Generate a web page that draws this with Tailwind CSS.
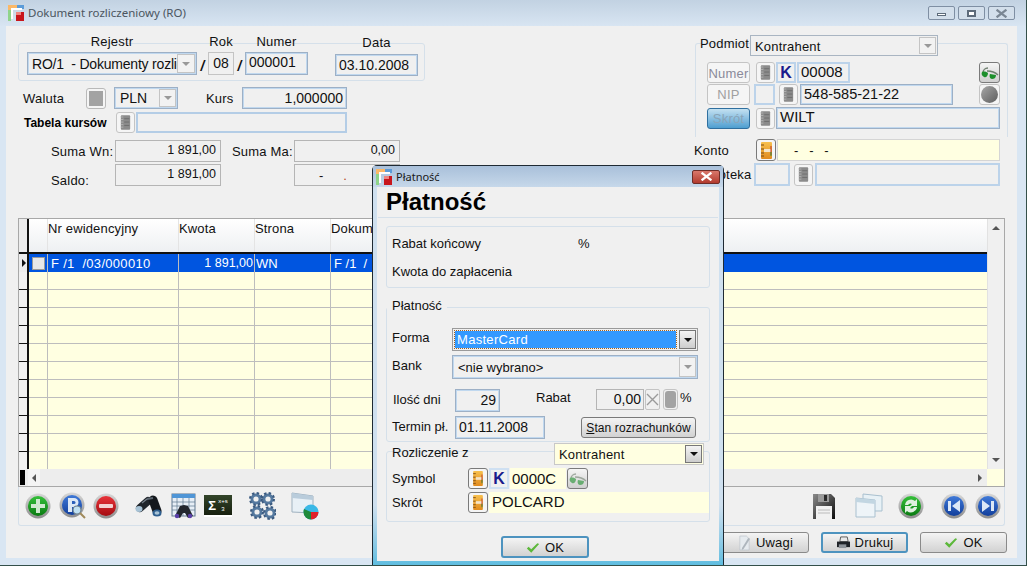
<!DOCTYPE html>
<html lang="pl">
<head>
<meta charset="UTF-8">
<title>Dokument rozliczeniowy (RO)</title>
<script src="https://cdn.jsdelivr.net/npm/@tailwindcss/browser@4"></script>
</head>
<body class="bg-[#d9e6f3] overflow-hidden font-['Liberation_Sans',sans-serif] text-[13px] leading-none text-[#111]">

<!-- shared icons -->
<svg class="absolute w-0 h-0" aria-hidden="true">
  <defs>
    <linearGradient id="gOrange" x1="0" y1="0" x2="0" y2="1"><stop offset="0" stop-color="#f7c04e"/><stop offset="1" stop-color="#e08a1e"/></linearGradient>
    <linearGradient id="gGreen" x1="0" y1="0" x2="0" y2="1"><stop offset="0" stop-color="#35c03a"/><stop offset="1" stop-color="#0a7a12"/></linearGradient>
    <linearGradient id="gRed" x1="0" y1="0" x2="0" y2="1"><stop offset="0" stop-color="#e8333a"/><stop offset="1" stop-color="#a50d12"/></linearGradient>
    <linearGradient id="gBlue" x1="0" y1="0" x2="0" y2="1"><stop offset="0" stop-color="#3f79d8"/><stop offset="1" stop-color="#123f9c"/></linearGradient>
    <linearGradient id="gRim" x1="0" y1="0" x2="0" y2="1"><stop offset="0" stop-color="#d8d8d8"/><stop offset="1" stop-color="#8d8d8d"/></linearGradient>
    <linearGradient id="gDisk" x1="0" y1="0" x2="1" y2="1"><stop offset="0" stop-color="#8a8a8a"/><stop offset="1" stop-color="#0d0d0d"/></linearGradient>
    <symbol id="app" viewBox="0 0 16 16">
      <path d="M0 0h9v3H3v2H0z" fill="#fbb868"/><path d="M9 0h7v4H9z" fill="#5b9bd8"/><path d="M0 5h3v11H0z" fill="#8fd48a"/><path d="M3 3h11v2H5v9H3z" fill="#fff"/><path d="M8 7h8v9H8z" fill="#c8161c"/><path d="M8 7h5v3H8z" fill="#f0857f"/>
    </symbol>
    <symbol id="bookGray" viewBox="0 0 13 17">
      <rect x="1" y="0" width="11" height="17" rx="1" fill="#8b8b8b"/><path d="M1 2h3M1 5h3M1 8h3M1 11h3M1 14h3" stroke="#b7b7b7"/><path d="M5 4h6M5 8h6M5 12h6" stroke="#6a6a6a"/>
    </symbol>
    <symbol id="bookOrange" viewBox="0 0 13 17">
      <rect x="1" y="0" width="11" height="17" rx="1" fill="url(#gOrange)"/><path d="M1 3h3M1 7h3M1 11h3M1 14h3" stroke="#7c4a10"/><path d="M4 7h7v3H4z" fill="#f4e4c8"/><path d="M11 4v9" stroke="#c0392b"/><path d="M11 10v4" stroke="#3a9a35"/>
    </symbol>
    <symbol id="glasses" viewBox="0 0 18 14">
      <path d="M2 7c0-3 2-5 5-5M6 5c4 0 8 1 11 4" stroke="#6f7f6f" stroke-width="1.300" fill="none"/><path d="M1 6c2-1 5 0 6 1 0 3-2 5-4 4S0 8 1 6zM9 8l6 1c0 3-2 4-4 4s-3-3-2-5z" fill="#1d8f2c"/>
    </symbol>
    <symbol id="plusBall" viewBox="0 0 26 26">
      <circle cx="13" cy="13" r="12.500" fill="url(#gRim)"/><circle cx="13" cy="13" r="10" fill="url(#gGreen)"/><path d="M11 6h4v5h5v4h-5v5h-4v-5H6v-4h5z" fill="#cfe9cf"/>
    </symbol>
    <symbol id="minusBall" viewBox="0 0 26 26">
      <circle cx="13" cy="13" r="12.500" fill="url(#gRim)"/><circle cx="13" cy="13" r="10" fill="url(#gRed)"/><rect x="6" y="11" width="14" height="4" rx="1" fill="#f3d2d2"/>
    </symbol>
    <symbol id="pBall" viewBox="0 0 28 28">
      <circle cx="13" cy="13" r="12.500" fill="url(#gRim)"/><circle cx="13" cy="13" r="10" fill="url(#gBlue)"/><path d="M9 6h6a4 4 0 0 1 0 9h-2v5H9z" fill="#dce8f6"/><path d="M13 9v3h2a1.500 1.500 0 0 0 0-3z" fill="#2a5fba"/><circle cx="18" cy="18" r="4" fill="#bfe0f2" stroke="#6a7d8a" stroke-width="1.200"/><path d="M21 21l5 5" stroke="#a08a5a" stroke-width="2"/>
    </symbol>
    <symbol id="refreshBall" viewBox="0 0 26 26">
      <circle cx="13" cy="13" r="12.500" fill="url(#gRim)"/><circle cx="13" cy="13" r="10" fill="url(#gGreen)"/><path d="M7 12a6 6 0 0 1 10-4l2-2v7h-7l2-2a3 3 0 0 0-4 1zM19 14a6 6 0 0 1-10 4l-2 2v-7h7l-2 2a3 3 0 0 0 4-1z" fill="#dff0df"/>
    </symbol>
    <symbol id="prevBall" viewBox="0 0 26 26">
      <circle cx="13" cy="13" r="12.500" fill="url(#gRim)"/><circle cx="13" cy="13" r="10" fill="url(#gBlue)"/><path d="M7 8h3v10H7zM19 7v12l-8-6z" fill="#dce8f6"/>
    </symbol>
    <symbol id="nextBall" viewBox="0 0 26 26">
      <circle cx="13" cy="13" r="12.500" fill="url(#gRim)"/><circle cx="13" cy="13" r="10" fill="url(#gBlue)"/><path d="M16 8h3v10h-3zM7 7v12l8-6z" fill="#dce8f6"/>
    </symbol>
    <symbol id="binoculars" viewBox="0 0 28 22">
      <path d="M5 13L13 6" stroke="#20252b" stroke-width="8" stroke-linecap="round"/><path d="M18 5l4 11" stroke="#14181d" stroke-width="9" stroke-linecap="round"/><path d="M12 4l6-1" stroke="#5c6670" stroke-width="2"/><path d="M7 8l5-4" stroke="#77828c" stroke-width="1.300"/><ellipse cx="4" cy="14" rx="3.500" ry="3" fill="#a8c3d6"/><ellipse cx="22" cy="18" rx="4.500" ry="3.500" fill="#2f5f8f"/><ellipse cx="22" cy="18" rx="2.500" ry="1.800" fill="#a8c3d6"/>
    </symbol>
    <symbol id="tableBino" viewBox="0 0 26 26">
      <rect x="1" y="1" width="23" height="22" fill="#e7eef6" stroke="#60788f"/><rect x="1" y="1" width="23" height="4" fill="#4f95d6"/><path d="M1 9h23M1 13h23M1 17h23M6 5v18M12 5v18M18 5v18" stroke="#60788f" stroke-width=".7"/><path d="M9 13l4-1 4 1 5 10-5 2-3-5h-2l-3 5-5-2z" fill="#22262e"/><circle cx="6" cy="23" r="2.200" fill="#5a3fa8"/><circle cx="19" cy="23" r="2.200" fill="#5a3fa8"/>
    </symbol>
    <symbol id="gears" viewBox="0 0 28 28">
      <g fill="#55799f"><circle cx="8" cy="7" r="5.500"/><circle cx="20" cy="7" r="5.500"/><circle cx="9" cy="20" r="5.500"/><circle cx="22" cy="21" r="5.500"/></g>
      <g stroke="#3a5a80" stroke-width="2" stroke-dasharray="2.500 2.200" fill="none"><circle cx="8" cy="7" r="6"/><circle cx="20" cy="7" r="6"/><circle cx="9" cy="20" r="6"/><circle cx="22" cy="21" r="6"/></g>
      <g fill="#f0f0f0"><circle cx="8" cy="7" r="2.600"/><circle cx="20" cy="7" r="2.600"/><circle cx="9" cy="20" r="2.600"/><circle cx="22" cy="21" r="2.600"/></g>
    </symbol>
    <symbol id="windowPie" viewBox="0 0 28 28">
      <path d="M1 1l21 3v17L1 20z" fill="#e8f0f6" stroke="#9fb1bf"/><path d="M1 1l21 3v4L1 6z" fill="#b9ccdb"/><circle cx="20" cy="20" r="7.500" fill="#3ab8e6"/><path d="M20 20v7.500a7.500 7.500 0 0 0 7.500-7.500z" fill="#e0212a"/><path d="M20 20h-7.500a7.500 7.500 0 0 0 7.500 7.500z" fill="#1f8a3a"/><path d="M20 20l-7-3a7.500 7.500 0 0 0-.500 3z" fill="#1f8a3a"/>
    </symbol>
    <symbol id="floppy" viewBox="0 0 24 28">
      <path d="M1 2h18l4 4v21H1z" fill="url(#gDisk)"/><rect x="6" y="2" width="11" height="8" fill="#9a9a9a"/><rect x="12" y="3" width="3" height="6" fill="#2a2a2a"/><rect x="4" y="14" width="16" height="13" fill="#f1f1f1"/><path d="M6 18h12M6 21h12" stroke="#bbb"/>
    </symbol>
    <symbol id="windows" viewBox="0 0 28 26">
      <path d="M8 1l19 2v15H8z" fill="#e8f1f6" stroke="#a9c0cf"/><path d="M1 5l19 2v17H1z" fill="#eef4f8" stroke="#a9c0cf"/><path d="M1 5l19 2v4L1 9z" fill="#c2d6e2"/>
    </symbol>
    <symbol id="check" viewBox="0 0 16 12">
      <path d="M1 7l2-2 3 3 7-7 2 1-9 10z" fill="#5cb83a"/>
    </symbol>
    <symbol id="printer" viewBox="0 0 16 14">
      <path d="M5 1h7l1 5H4z" fill="#e8e8e8" stroke="#333" stroke-width=".8"/><path d="M1 6h14v6H1z" fill="#1f2328"/><path d="M3 9h8v4H3z" fill="#8d9399"/>
    </symbol>
    <symbol id="note" viewBox="0 0 14 17">
      <path d="M2 1h7l3 3v12H2z" fill="#e6ebef" stroke="#c0c7cd" stroke-width=".8"/><path d="M11 3l2 1-7 11-2 1 .3-2z" fill="#aeb6bd"/>
    </symbol>
    <symbol id="closeX" viewBox="0 0 12 10">
      <path d="M1.500 1.500l9 7M10.500 1.500l-9 7" stroke="currentColor" stroke-width="2.500" stroke-linecap="square"/>
    </symbol>
  </defs>
</svg>

<div class="relative w-[1027px] h-[566px] overflow-hidden border-b border-r border-[#34504a]">

  <!-- main window title bar -->
  <div class="h-[26px] flex items-center pl-[8px] pr-[11px] bg-gradient-to-b from-[#c2d2e2] to-[#d8e5f2]">
    <svg class="w-[16px] h-[16px]"><use href="#app"/></svg>
    <span class="ml-[4px] font-['Noto_Sans',sans-serif] text-[11.5px] text-[#4b5560]">Dokument rozliczeniowy (RO)</span>
    <div class="ml-auto flex gap-[3px]">
      <div class="w-[27px] h-[14px] rounded-[2px] border border-[#7f8fa3] bg-[#d3dfeb] flex items-center justify-center"><div class="w-[9px] h-[3px] mt-[3px] border border-[#5d6b7a] bg-white"></div></div>
      <div class="w-[27px] h-[14px] rounded-[2px] border border-[#7f8fa3] bg-[#d3dfeb] flex items-center justify-center"><div class="w-[9px] h-[7px] border-2 border-[#5d6b7a] bg-white"></div></div>
      <div class="w-[27px] h-[14px] rounded-[2px] border border-[#7f8fa3] bg-[#d3dfeb] flex items-center justify-center text-[#7b8794]"><svg class="w-[11px] h-[9px]"><use href="#closeX"/></svg></div>
    </div>
  </div>

  <!-- main window body -->
  <div class="ml-[6px] w-[1011px] h-[532px] bg-[#f0f0f0]">
    <div class="flex h-[192px]">

      <!-- left form -->
      <div class="w-[688px] pl-[12px] pt-[17px]">
        <div class="w-[407px] h-[38px] border border-[#d5e0ea] rounded-[3px] pl-[8px] flex items-start">
          <div class="-mt-[9px] w-[170px]">
            <div class="h-[17px] text-center tracking-[0.2px]">Rejestr</div>
            <div class="h-[23px] flex items-center pl-[4px] border border-[#9db0c6] shadow-[inset_0_0_0_1px_#c0d8ef] text-[14px] overflow-hidden relative whitespace-nowrap">
              <span class="whitespace-pre tracking-[-0.2px]">RO/1  - Dokumenty rozlic</span>
              <div class="absolute right-[1px] top-[1px] w-[18px] h-[19px] bg-[#f2f2f2] border border-[#c4c4c4] flex items-center justify-center"><div class="border-x-[4px] border-x-transparent border-t-[4px] border-t-[#999]"></div></div>
            </div>
          </div>
          <div class="w-[11px] mt-[15px] text-center font-bold italic text-[14px]">/</div>
          <div class="-mt-[9px] w-[26px]">
            <div class="h-[17px] text-center whitespace-nowrap tracking-[0.2px]">Rok</div>
            <div class="h-[23px] flex items-center justify-center pb-[2px] border border-[#c4c4c4] text-[14px]">08</div>
          </div>
          <div class="w-[11px] mt-[15px] text-center font-bold italic text-[14px]">/</div>
          <div class="-mt-[9px] w-[63px]">
            <div class="h-[17px] text-center tracking-[0.2px]">Numer</div>
            <div class="h-[23px] flex items-center pl-[3px] pb-[3px] border border-[#9db0c6] shadow-[inset_0_0_0_1px_#c0d8ef] text-[14px]">000001</div>
          </div>
          <div class="-mt-[8px] ml-[27px] w-[83px]">
            <div class="h-[18px] text-center tracking-[0.2px]">Data</div>
            <div class="h-[22px] flex items-center pl-[3px] border border-[#9db0c6] shadow-[inset_0_0_0_1px_#c0d8ef] text-[14px]">03.10.2008</div>
          </div>
        </div>

        <div class="mt-[6px] pl-[5px] flex items-center h-[22px]">
          <span class="w-[63px] tracking-[0.2px]">Waluta</span>
          <div class="w-[20px] h-[21px] border border-[#b9b9b9] rounded-[3px] bg-[#f5f5f5] p-[2px]"><div class="w-full h-full bg-[#a3a3a3]"></div></div>
          <div class="ml-[8px] w-[64px] h-[22px] relative flex items-center pl-[5px] border border-[#9db0c6] shadow-[inset_0_0_0_1px_#c0d8ef] text-[14px]">PLN
            <div class="absolute right-[1px] top-[1px] w-[17px] h-[18px] bg-[#f2f2f2] border border-[#c4c4c4] flex items-center justify-center"><div class="border-x-[4px] border-x-transparent border-t-[4px] border-t-[#999]"></div></div>
          </div>
          <span class="ml-[28px] w-[36px] tracking-[0.2px]">Kurs</span>
          <div class="w-[105px] h-[22px] flex items-center justify-end pr-[3px] pb-[1px] border border-[#9db0c6] shadow-[inset_0_0_0_1px_#c0d8ef] text-[14px]">1,000000</div>
        </div>

        <div class="mt-[3px] pl-[6px] flex items-center h-[21px]">
          <span class="w-[92px] font-bold text-[12px] text-black">Tabela kursów</span>
          <div class="w-[19px] h-[21px] border border-[#c4c4c4] rounded-[3px] bg-[#f5f5f5] flex items-center justify-center"><svg class="w-[11px] h-[15px]"><use href="#bookGray"/></svg></div>
          <div class="ml-[1px] w-[211px] h-[21px] border-2 border-[#b4cde6]"></div>
        </div>

        <div class="mt-[7px] pl-[33px] flex items-center h-[22px]">
          <span class="w-[64px] tracking-[0.2px]">Suma Wn:</span>
          <div class="w-[106px] h-[22px] flex items-center justify-end pr-[4px] pb-[1px] border border-[#b5b5b5] text-[12.5px]">1 891,00</div>
          <span class="ml-[11px] w-[62px] tracking-[0.2px]">Suma Ma:</span>
          <div class="w-[106px] h-[22px] flex items-center justify-end pr-[4px] pb-[1px] border border-[#b5b5b5] text-[12.5px]">0,00</div>
        </div>
        <div class="mt-[2px] pl-[33px] flex items-center h-[22px]">
          <span class="w-[64px] pt-[10px] tracking-[0.2px]">Saldo:</span>
          <div class="w-[106px] h-[22px] flex items-center justify-end pr-[4px] pb-[1px] border border-[#b5b5b5] text-[12.5px]">1 891,00</div>
          <div class="ml-[73px] w-[106px] h-[22px] flex items-center pl-[24px] gap-[20px] border border-[#b5b5b5]"><span>-</span><span class="text-[#b34a20]">.</span></div>
        </div>
      </div>

      <!-- right form -->
      <div class="w-[323px] pl-[1px] pt-[17px]">
        <div class="w-[313px] h-[94px] border-x border-t border-[#d5e0ea] rounded-t-[3px] pl-[11px] pr-[7px]">
          <div class="-mt-[9px] -ml-[7px] flex items-center h-[21px]">
            <span class="w-[50px] pb-[4px] tracking-[0.2px]">Podmiot</span>
            <div class="relative w-[188px] h-[21px] flex items-center pl-[4px] pt-[1px] border border-[#a9b5c2] bg-[#f0f0f0] tracking-[0.2px]">Kontrahent
              <div class="absolute right-[1px] top-[1px] w-[17px] h-[17px] bg-[#f2f2f2] border border-[#c4c4c4] flex items-center justify-center"><div class="border-x-[4px] border-x-transparent border-t-[4px] border-t-[#999]"></div></div>
            </div>
          </div>
          <div class="mt-[6px] flex items-center h-[21px]">
            <div class="w-[43px] h-[21px] flex items-center justify-center pt-[1px] border border-[#c4c4c4] rounded-[3px] bg-[#f5f5f5] text-[#8a8a9a] tracking-[0.2px]">Numer</div>
            <div class="ml-[6px] w-[19px] h-[21px] border border-[#c4c4c4] rounded-[3px] bg-[#f5f5f5] flex items-center justify-center"><svg class="w-[11px] h-[15px]"><use href="#bookGray"/></svg></div>
            <div class="ml-[1px] w-[20px] h-[21px] flex items-center justify-center border-2 border-[#bcd3ea] font-bold text-[16px] text-[#1a1a8c]">K</div>
            <div class="ml-[1px] w-[53px] h-[21px] flex items-center pl-[2px] pb-[2px] border-2 border-[#bcd3ea] text-[15px]">00008</div>
            <div class="ml-auto w-[21px] h-[21px] border border-[#7a7a7a] rounded-[3px] bg-gradient-to-b from-[#f5f5f5] to-[#cfcfcf] flex items-center justify-center"><svg class="w-[18px] h-[14px]"><use href="#glasses"/></svg></div>
          </div>
          <div class="mt-[1px] flex items-center h-[21px]">
            <div class="w-[43px] h-[21px] flex items-center justify-center border border-[#c4c4c4] rounded-[3px] bg-[#f5f5f5] text-[#a0a0a0] tracking-[0.2px]">NIP</div>
            <div class="ml-[4px] w-[21px] h-[21px] border-2 border-[#bcd3ea]"></div>
            <div class="ml-[4px] w-[19px] h-[21px] border border-[#c4c4c4] rounded-[3px] bg-[#f5f5f5] flex items-center justify-center"><svg class="w-[11px] h-[15px]"><use href="#bookGray"/></svg></div>
            <div class="ml-[2px] w-[153px] h-[21px] flex items-center pl-[3px] pb-[1px] border border-[#9db0c6] shadow-[inset_0_0_0_1px_#c0d8ef] text-[14.5px]">548-585-21-22</div>
            <div class="ml-auto w-[21px] h-[21px] border border-[#c4c4c4] rounded-[3px] bg-[#f5f5f5] flex items-center justify-center"><div class="w-[17px] h-[17px] rounded-full bg-gradient-to-br from-[#a8a8a8] to-[#5e5e5e]"></div></div>
          </div>
          <div class="mt-[2px] flex items-center h-[22px]">
            <div class="w-[43px] h-[21px] flex items-center justify-center border border-[#2f6f9f] rounded-[3px] bg-gradient-to-b from-[#c3e1f1] to-[#4d9ed0] text-[#88a4b8] tracking-[0.2px]">Skrót</div>
            <div class="ml-[6px] w-[19px] h-[21px] border border-[#c4c4c4] rounded-[3px] bg-[#f5f5f5] flex items-center justify-center"><svg class="w-[11px] h-[15px]"><use href="#bookGray"/></svg></div>
            <div class="ml-[1px] w-[224px] h-[22px] flex items-center pl-[3px] pb-[3px] border border-[#9db0c6] shadow-[inset_0_0_0_1px_#c0d8ef] text-[15px]">WILT</div>
          </div>
        </div>
        <div class="mt-[2px] -ml-[1px] flex items-center h-[22px]">
          <span class="w-[62px] tracking-[0.2px]">Konto</span>
          <div class="w-[20px] h-[22px] border border-[#7a7a7a] rounded-[3px] bg-[#f5f5f5] flex items-center justify-center"><svg class="w-[13px] h-[17px]"><use href="#bookOrange"/></svg></div>
          <div class="ml-[1px] w-[223px] h-[22px] flex items-center pl-[16px] bg-[#ffffe1] border border-[#d5d5d5] whitespace-pre">-   -   -</div>
        </div>
        <div class="mt-[2px] -ml-[1px] flex items-center h-[23px]">
          <span class="w-[60px] tracking-[0.2px]">Kartoteka</span>
          <div class="w-[36px] h-[23px] border-2 border-[#bcd3ea]"></div>
          <div class="ml-[4px] w-[19px] h-[22px] border border-[#c4c4c4] rounded-[3px] bg-[#f5f5f5] flex items-center justify-center"><svg class="w-[11px] h-[15px]"><use href="#bookGray"/></svg></div>
          <div class="ml-[2px] w-[185px] h-[23px] border-2 border-[#bcd3ea]"></div>
        </div>
      </div>
    </div>

    <!-- grid with toolbar -->
    <div class="ml-[12px] w-[987px] h-[308px]">
      <div class="border-x border-t border-[#a8a8a8]">
        <div class="flex h-[250px]">
          <div class="w-[968px] overflow-hidden">
            <!-- header -->
            <div class="flex h-[35px] border-b-2 border-b-[#111] bg-gradient-to-b from-white to-[#eef0f2]">
              <div class="w-[10px] bg-[#ececec] border-r-2 border-r-[#111]"></div>
              <div class="w-[19px] border-r border-r-[#e4e4e4]"></div>
              <div class="w-[131px] pt-[3px] border-r border-r-[#e4e4e4] tracking-[0.15px]">Nr ewidencyjny</div>
              <div class="w-[76px] pt-[3px] border-r border-r-[#e4e4e4] tracking-[0.15px]">Kwota</div>
              <div class="w-[76px] pt-[3px] border-r border-r-[#e4e4e4] tracking-[0.15px]">Strona</div>
              <div class="pt-[3px] tracking-[0.15px]">Dokument</div>
            </div>
            <!-- selected row -->
            <div class="flex h-[18px]">
              <div class="w-[10px] bg-[#ececec] border-r-2 border-r-[#111] flex items-center justify-end pr-[1px]"><div class="border-y-[4px] border-y-transparent border-l-[4px] border-l-[#111]"></div></div>
              <div class="w-[19px] bg-[#0055e0] border-r border-r-[#bdbdbd] flex items-center justify-center"><div class="w-[13px] h-[13px] bg-[#e8e8e8] border border-[#9a9a9a]"></div></div>
              <div class="w-[131px] bg-[#0055e0] text-white pl-[3px] flex items-center border-r border-r-[#bdbdbd] whitespace-pre tracking-[0.3px]">F /1  /03/000010</div>
              <div class="w-[76px] bg-[#0055e0] text-white pr-[1px] flex items-center justify-end border-r border-r-[#bdbdbd] text-[12.5px]">1 891,00</div>
              <div class="w-[76px] bg-[#0055e0] text-white pl-[1px] flex items-center border-r border-r-[#bdbdbd]">WN</div>
              <div class="flex-1 bg-[#0055e0] text-white pl-[3px] flex items-center whitespace-pre">F /1  /</div>
            </div>
            <!-- empty rows -->
            <div class="flex h-[18px]"><div class="w-[10px] bg-[#f0f0f0] border-r-2 border-r-[#111] border-b border-b-[#111]"></div><div class="w-[19px] bg-[#ffffe1] border-b border-r border-[#bdbdbd]"></div><div class="w-[131px] bg-[#ffffe1] border-b border-r border-[#bdbdbd]"></div><div class="w-[76px] bg-[#ffffe1] border-b border-r border-[#bdbdbd]"></div><div class="w-[76px] bg-[#ffffe1] border-b border-r border-[#bdbdbd]"></div><div class="flex-1 bg-[#ffffe1] border-b border-[#bdbdbd]"></div></div>
            <div class="flex h-[18px]"><div class="w-[10px] bg-[#f0f0f0] border-r-2 border-r-[#111] border-b border-b-[#111]"></div><div class="w-[19px] bg-[#ffffe1] border-b border-r border-[#bdbdbd]"></div><div class="w-[131px] bg-[#ffffe1] border-b border-r border-[#bdbdbd]"></div><div class="w-[76px] bg-[#ffffe1] border-b border-r border-[#bdbdbd]"></div><div class="w-[76px] bg-[#ffffe1] border-b border-r border-[#bdbdbd]"></div><div class="flex-1 bg-[#ffffe1] border-b border-[#bdbdbd]"></div></div>
            <div class="flex h-[18px]"><div class="w-[10px] bg-[#f0f0f0] border-r-2 border-r-[#111] border-b border-b-[#111]"></div><div class="w-[19px] bg-[#ffffe1] border-b border-r border-[#bdbdbd]"></div><div class="w-[131px] bg-[#ffffe1] border-b border-r border-[#bdbdbd]"></div><div class="w-[76px] bg-[#ffffe1] border-b border-r border-[#bdbdbd]"></div><div class="w-[76px] bg-[#ffffe1] border-b border-r border-[#bdbdbd]"></div><div class="flex-1 bg-[#ffffe1] border-b border-[#bdbdbd]"></div></div>
            <div class="flex h-[18px]"><div class="w-[10px] bg-[#f0f0f0] border-r-2 border-r-[#111] border-b border-b-[#111]"></div><div class="w-[19px] bg-[#ffffe1] border-b border-r border-[#bdbdbd]"></div><div class="w-[131px] bg-[#ffffe1] border-b border-r border-[#bdbdbd]"></div><div class="w-[76px] bg-[#ffffe1] border-b border-r border-[#bdbdbd]"></div><div class="w-[76px] bg-[#ffffe1] border-b border-r border-[#bdbdbd]"></div><div class="flex-1 bg-[#ffffe1] border-b border-[#bdbdbd]"></div></div>
            <div class="flex h-[18px]"><div class="w-[10px] bg-[#f0f0f0] border-r-2 border-r-[#111] border-b border-b-[#111]"></div><div class="w-[19px] bg-[#ffffe1] border-b border-r border-[#bdbdbd]"></div><div class="w-[131px] bg-[#ffffe1] border-b border-r border-[#bdbdbd]"></div><div class="w-[76px] bg-[#ffffe1] border-b border-r border-[#bdbdbd]"></div><div class="w-[76px] bg-[#ffffe1] border-b border-r border-[#bdbdbd]"></div><div class="flex-1 bg-[#ffffe1] border-b border-[#bdbdbd]"></div></div>
            <div class="flex h-[18px]"><div class="w-[10px] bg-[#f0f0f0] border-r-2 border-r-[#111] border-b border-b-[#111]"></div><div class="w-[19px] bg-[#ffffe1] border-b border-r border-[#bdbdbd]"></div><div class="w-[131px] bg-[#ffffe1] border-b border-r border-[#bdbdbd]"></div><div class="w-[76px] bg-[#ffffe1] border-b border-r border-[#bdbdbd]"></div><div class="w-[76px] bg-[#ffffe1] border-b border-r border-[#bdbdbd]"></div><div class="flex-1 bg-[#ffffe1] border-b border-[#bdbdbd]"></div></div>
            <div class="flex h-[18px]"><div class="w-[10px] bg-[#f0f0f0] border-r-2 border-r-[#111] border-b border-b-[#111]"></div><div class="w-[19px] bg-[#ffffe1] border-b border-r border-[#bdbdbd]"></div><div class="w-[131px] bg-[#ffffe1] border-b border-r border-[#bdbdbd]"></div><div class="w-[76px] bg-[#ffffe1] border-b border-r border-[#bdbdbd]"></div><div class="w-[76px] bg-[#ffffe1] border-b border-r border-[#bdbdbd]"></div><div class="flex-1 bg-[#ffffe1] border-b border-[#bdbdbd]"></div></div>
            <div class="flex h-[18px]"><div class="w-[10px] bg-[#f0f0f0] border-r-2 border-r-[#111] border-b border-b-[#111]"></div><div class="w-[19px] bg-[#ffffe1] border-b border-r border-[#bdbdbd]"></div><div class="w-[131px] bg-[#ffffe1] border-b border-r border-[#bdbdbd]"></div><div class="w-[76px] bg-[#ffffe1] border-b border-r border-[#bdbdbd]"></div><div class="w-[76px] bg-[#ffffe1] border-b border-r border-[#bdbdbd]"></div><div class="flex-1 bg-[#ffffe1] border-b border-[#bdbdbd]"></div></div>
            <div class="flex h-[18px]"><div class="w-[10px] bg-[#f0f0f0] border-r-2 border-r-[#111] border-b border-b-[#111]"></div><div class="w-[19px] bg-[#ffffe1] border-b border-r border-[#bdbdbd]"></div><div class="w-[131px] bg-[#ffffe1] border-b border-r border-[#bdbdbd]"></div><div class="w-[76px] bg-[#ffffe1] border-b border-r border-[#bdbdbd]"></div><div class="w-[76px] bg-[#ffffe1] border-b border-r border-[#bdbdbd]"></div><div class="flex-1 bg-[#ffffe1] border-b border-[#bdbdbd]"></div></div>
            <div class="flex h-[18px]"><div class="w-[10px] bg-[#f0f0f0] border-r-2 border-r-[#111] border-b border-b-[#111]"></div><div class="w-[19px] bg-[#ffffe1] border-b border-r border-[#bdbdbd]"></div><div class="w-[131px] bg-[#ffffe1] border-b border-r border-[#bdbdbd]"></div><div class="w-[76px] bg-[#ffffe1] border-b border-r border-[#bdbdbd]"></div><div class="w-[76px] bg-[#ffffe1] border-b border-r border-[#bdbdbd]"></div><div class="flex-1 bg-[#ffffe1] border-b border-[#bdbdbd]"></div></div>
            <div class="flex h-[18px]"><div class="w-[10px] bg-[#f0f0f0] border-r-2 border-r-[#111]"></div><div class="w-[19px] bg-[#ffffe1] border-r border-[#bdbdbd]"></div><div class="w-[131px] bg-[#ffffe1] border-r border-[#bdbdbd]"></div><div class="w-[76px] bg-[#ffffe1] border-r border-[#bdbdbd]"></div><div class="w-[76px] bg-[#ffffe1] border-r border-[#bdbdbd]"></div><div class="flex-1 bg-[#ffffe1]"></div></div>
          </div>
          <!-- vertical scrollbar -->
          <div class="w-[17px] bg-[#f0f0f0] border-l border-l-[#e2e2e2] flex flex-col justify-between items-center py-[7px]">
            <div class="border-x-[4px] border-x-transparent border-b-[4px] border-b-[#555]"></div>
            <div class="border-x-[4px] border-x-transparent border-t-[4px] border-t-[#555]"></div>
          </div>
        </div>
        <!-- horizontal scrollbar -->
        <div class="flex h-[18px] bg-[#ededed] border-b border-b-[#a8a8a8]">
          <div class="w-[5px] ml-[1px] my-[1px] bg-[#000]"></div>
          <div class="w-[12px] ml-[3px] bg-[#f4f4f4] flex items-center justify-center"><div class="border-y-[4px] border-y-transparent border-r-[4px] border-r-[#555]"></div></div>
          <div class="flex-1 flex items-center justify-end pr-[5px]"><div class="border-y-[4px] border-y-transparent border-l-[4px] border-l-[#555]"></div></div>
          <div class="w-[17px] bg-[#ffffe1]"></div>
        </div>
      </div>
      <!-- toolbar -->
      <div class="flex items-center h-[39px] pl-[6px] pr-[3px] border-x border-b border-[#d5e0ea] rounded-b-[3px]">
        <svg class="w-[26px] h-[26px]"><use href="#plusBall"/></svg>
        <svg class="ml-[8px] w-[28px] h-[28px]"><use href="#pBall"/></svg>
        <svg class="ml-[6px] w-[26px] h-[26px]"><use href="#minusBall"/></svg>
        <svg class="ml-[16px] w-[28px] h-[24px]"><use href="#binoculars"/></svg>
        <svg class="ml-[8px] w-[26px] h-[26px]"><use href="#tableBino"/></svg>
        <div class="ml-[7px] w-[28px] h-[22px] bg-gradient-to-b from-[#33452a] to-[#18200f] border-b-2 border-b-white flex items-center justify-center gap-[2px] text-white"><span class="text-[13px] font-bold">Σ</span><span class="text-[6px] leading-[8px] text-center">x+s<br>3</span></div>
        <svg class="ml-[16px] w-[28px] h-[28px]"><use href="#gears"/></svg>
        <svg class="ml-[15px] w-[28px] h-[28px]"><use href="#windowPie"/></svg>
        <svg class="ml-auto w-[24px] h-[28px]"><use href="#floppy"/></svg>
        <svg class="ml-[19px] w-[28px] h-[26px]"><use href="#windows"/></svg>
        <svg class="ml-[15px] w-[26px] h-[26px]"><use href="#refreshBall"/></svg>
        <svg class="ml-[17px] w-[26px] h-[26px]"><use href="#prevBall"/></svg>
        <svg class="ml-[8px] w-[26px] h-[26px]"><use href="#nextBall"/></svg>
      </div>
    </div>

    <!-- main buttons -->
    <div class="mt-[6px] pr-[10px] flex justify-end gap-[12px]">
      <div class="w-[100px] h-[21px] flex items-center justify-end pr-[15px] gap-[5px] border border-[#8a8a8a] rounded-[3px] bg-gradient-to-b from-[#f4f4f4] to-[#d2d2d2] tracking-[0.2px]"><svg class="w-[13px] h-[16px]"><use href="#note"/></svg>Uwagi</div>
      <div class="w-[87px] h-[21px] flex items-center justify-center gap-[4px] border-2 border-[#4d93bf] rounded-[3px] bg-gradient-to-b from-[#f4f4f4] to-[#d2d2d2] tracking-[0.2px]"><svg class="w-[15px] h-[13px]"><use href="#printer"/></svg>Drukuj</div>
      <div class="w-[87px] h-[21px] flex items-center justify-center gap-[5px] border border-[#8a8a8a] rounded-[3px] bg-gradient-to-b from-[#f4f4f4] to-[#d2d2d2] tracking-[0.2px]"><svg class="w-[14px] h-[11px]"><use href="#check"/></svg>OK</div>
    </div>
  </div>

  <!-- dialog window -->
  <div class="absolute left-[372px] top-[165px] w-[352px] h-[400px] border-x border-t border-[#1f2a33] rounded-t-[5px] bg-gradient-to-b from-[#cfe0ef] via-[#cfe0ef] via-85% to-[#5fbde0]">
    <div class="h-[21px] flex items-center pl-[3px] pr-[3px] bg-gradient-to-b from-[#a9c0da] to-[#c6d8ea]">
      <svg class="w-[16px] h-[16px]"><use href="#app"/></svg>
      <span class="ml-[4px] font-['Noto_Sans',sans-serif] text-[11px] text-[#1a1a1a]">Płatność</span>
      <div class="ml-auto w-[28px] h-[14px] rounded-[2px] border border-[#6e2d28] bg-gradient-to-b from-[#d9776b] to-[#b23a2e] flex items-center justify-center text-white"><svg class="w-[11px] h-[9px]"><use href="#closeX"/></svg></div>
    </div>
    <div class="mx-[4px] h-[374px] bg-[#f0f0f0]">
      <div class="h-[30px] ml-[9px] flex items-center font-bold text-[24px] text-black">Płatność</div>
      <div class="mx-[1px] border-t border-t-[#d5e0ea]"></div>

      <div class="mt-[8px] ml-[9px] w-[324px] h-[62px] border border-[#d5e0ea] rounded-[3px] pl-[5px] pt-[9px]">
        <div class="flex h-[14px] items-center"><span class="w-[186px]">Rabat końcowy</span><span>%</span></div>
        <div class="mt-[14px] h-[14px] flex items-center">Kwota do zapłacenia</div>
      </div>

      <div class="mt-[19px] ml-[9px] w-[324px] h-[135px] border border-[#d5e0ea] rounded-[3px] pl-[5px]">
        <div class="-mt-[9px] -ml-[5px] pl-[5px] pr-[5px] w-fit h-[16px] bg-[#f0f0f0]">Płatność</div>
        <div class="mt-[13px] flex items-center h-[23px]">
          <span class="w-[60px] pb-[5px]">Forma</span>
          <div class="relative w-[246px] h-[23px] border border-[#9a9a9a] p-[2px]">
            <div class="h-full bg-[#3399ff] outline-1 outline-dotted outline-[#a06020] flex items-center pl-[2px] pb-[1px] mr-[19px] text-white tracking-[0.3px]">MasterCard</div>
            <div class="absolute right-[1px] top-[1px] w-[17px] h-[19px] bg-gradient-to-b from-[#f4f4f4] to-[#cdcdcd] border border-[#777] flex items-center justify-center"><div class="border-x-[4px] border-x-transparent border-t-[4px] border-t-[#111]"></div></div>
          </div>
        </div>
        <div class="mt-[4px] flex items-center h-[24px]">
          <span class="w-[60px] pb-[4px]">Bank</span>
          <div class="relative w-[246px] h-[24px] flex items-center pl-[5px] border border-[#9db0c6] shadow-[inset_0_0_0_1px_#c0d8ef]">&lt;nie wybrano&gt;
            <div class="absolute right-[1px] top-[1px] w-[17px] h-[20px] bg-[#f2f2f2] border border-[#c4c4c4] flex items-center justify-center"><div class="border-x-[4px] border-x-transparent border-t-[4px] border-t-[#999]"></div></div>
          </div>
        </div>
        <div class="mt-[10px] flex items-center h-[23px]">
          <span class="ml-[1px] w-[62px] pb-[2px]">Ilość dni</span>
          <div class="w-[45px] h-[23px] flex items-center justify-end pr-[3px] pb-[2px] border border-[#9db0c6] shadow-[inset_0_0_0_1px_#c0d8ef] text-[14px]">29</div>
          <span class="ml-[36px] w-[60px] pb-[6px]">Rabat</span>
          <div class="w-[48px] h-[21px] -mt-[2px] flex items-center justify-end pr-[2px] pb-[1px] border border-[#b5b5b5] text-[14px]">0,00</div>
          <div class="ml-[1px] -mt-[2px] w-[15px] h-[21px] border border-[#c4c4c4] rounded-[2px] flex items-center justify-center text-[#9a9a9a]"><svg class="w-[13px] h-[13px]" viewBox="0 0 13 13"><path d="M1 1l11 11M12 1L1 12" stroke="currentColor" stroke-width="1.400"/></svg></div>
          <div class="ml-[3px] -mt-[2px] w-[15px] h-[21px] border border-[#c4c4c4] rounded-[3px] p-[1px]"><div class="w-full h-full bg-[#a3a3a3] rounded-[3px]"></div></div>
          <span class="ml-[2px] pb-[6px]">%</span>
        </div>
        <div class="mt-[4px] flex items-center h-[23px]">
          <span class="w-[63px] pb-[2px]">Termin pł.</span>
          <div class="w-[90px] h-[23px] flex items-center pl-[3px] pb-[1px] border border-[#9db0c6] shadow-[inset_0_0_0_1px_#c0d8ef] text-[14px]">01.11.2008</div>
          <div class="ml-[36px] w-[115px] h-[21px] flex items-center justify-center border border-[#7a7a7a] rounded-[3px] bg-gradient-to-b from-[#f4f4f4] to-[#d2d2d2] text-[12px] tracking-[0.1px]"><span class="underline">S</span>tan rozrachunków</div>
        </div>
      </div>

      <div class="mt-[9px] ml-[9px] w-[324px] h-[71px] border border-[#d5e0ea] rounded-[3px] pl-[5px]">
        <div class="-mt-[9px] flex h-[22px]">
          <span class="w-[162px] pt-[3px]">Rozliczenie z</span>
          <div class="relative w-[150px] h-[22px] flex items-center pl-[4px] pt-[1px] bg-[#ffffe1] border border-[#c8c8c8] tracking-[0.2px]">Kontrahent
            <div class="absolute right-[1px] top-[1px] w-[17px] h-[18px] bg-gradient-to-b from-[#f4f4f4] to-[#cdcdcd] border border-[#777] flex items-center justify-center"><div class="border-x-[4px] border-x-transparent border-t-[4px] border-t-[#111]"></div></div>
          </div>
        </div>
        <div class="mt-[3px] flex items-center h-[21px]">
          <span class="w-[76px]">Symbol</span>
          <div class="w-[20px] h-[21px] border border-[#7a7a7a] rounded-[3px] bg-[#f5f5f5] flex items-center justify-center"><svg class="w-[12px] h-[15px]"><use href="#bookOrange"/></svg></div>
          <div class="ml-[1px] w-[20px] h-[21px] flex items-center justify-center border-2 border-[#cfe0f2] font-bold text-[16px] text-[#1a1a8c]">K</div>
          <div class="ml-[1px] w-[56px] h-[21px] flex items-center pl-[2px] pb-[1px] bg-[#ffffe1] text-[15px]">0000C</div>
          <div class="ml-[1px] w-[21px] h-[21px] border border-[#7a7a7a] rounded-[3px] bg-gradient-to-b from-[#f5f5f5] to-[#cfcfcf] flex items-center justify-center"><svg class="w-[18px] h-[14px] opacity-60"><use href="#glasses"/></svg></div>
        </div>
        <div class="mt-[3px] flex items-center h-[21px]">
          <span class="w-[76px]">Skrót</span>
          <div class="w-[20px] h-[21px] border border-[#7a7a7a] rounded-[3px] bg-[#f5f5f5] flex items-center justify-center"><svg class="w-[12px] h-[15px]"><use href="#bookOrange"/></svg></div>
          <div class="ml-[1px] flex-1 h-[21px] flex items-center pl-[3px] pb-[2px] bg-[#ffffe1] text-[15px]">POLCARD</div>
        </div>
      </div>

      <div class="mt-[14px] ml-[124px] w-[88px] h-[22px] flex items-center justify-center gap-[5px] border-2 border-[#4d93bf] rounded-[3px] bg-gradient-to-b from-[#f4f4f4] to-[#d2d2d2] tracking-[0.2px]"><svg class="w-[14px] h-[11px]"><use href="#check"/></svg>OK</div>
    </div>
  </div>
</div>
</body>
</html>
